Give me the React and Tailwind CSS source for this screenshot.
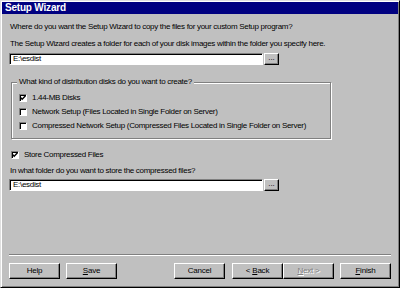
import React from "react";

const font = { fontFamily: '"Liberation Sans", Arial, sans-serif' };

const raised =
  "border border-t-white border-l-white border-r-black border-b-black shadow-[inset_-1px_-1px_0_#808080]";
const sunken =
  "border border-t-[#808080] border-l-[#808080] border-r-white border-b-white shadow-[inset_1px_1px_0_#000]";

const txt = "text-[8px] tracking-[-0.3px] whitespace-nowrap text-black";

function Field({ value }) {
  return (
    <div className="flex items-center gap-[1px]">
      <div className={`${sunken} bg-white w-[254px] h-[12px] flex items-center pl-[3px] leading-none ${txt}`}>
        {value}
      </div>
      <button className={`${raised} bg-[#c0c0c0] w-[15px] h-[12px] flex items-center justify-center text-[8px] leading-none text-black pb-[3px]`}>
        ...
      </button>
    </div>
  );
}

function Check({ checked, label }) {
  return (
    <div className="flex items-center h-[12px]">
      <span className={`${sunken} bg-white w-[8px] h-[8px] flex items-center justify-center shrink-0`}>
        {checked && (
          <svg width="6" height="6" viewBox="0 0 6 6">
            <path d="M0.5 2.5 L2.2 4.3 L5.5 0.8" stroke="#000" strokeWidth="1.4" fill="none" />
          </svg>
        )}
      </span>
      <span className={`ml-[5px] leading-none ${txt}`}>{label}</span>
    </div>
  );
}

function Btn({ children, disabled, className = "" }) {
  return (
    <button
      className={`${raised} bg-[#c0c0c0] w-[51px] h-[16px] flex items-center justify-center text-[8px] tracking-[-0.2px] leading-none ${
        disabled ? "text-[#808080] [text-shadow:1px_1px_0_#fff]" : "text-black"
      } ${className}`}
    >
      {children}
    </button>
  );
}

export default function App() {
  return (
    <div
      style={font}
      className="w-[400px] h-[288px] bg-[#c0c0c0] flex flex-col border border-t-[#dfdfdf] border-l-[#dfdfdf] border-r-black border-b-black shadow-[inset_1px_1px_0_#fff,inset_-1px_-1px_0_#808080] p-[1px] pb-[8px]"
    >
      <div className="h-[12px] bg-[#000080] flex items-center pl-[3px] text-white font-bold text-[10px] tracking-[-0.2px] leading-none">
        Setup Wizard
      </div>

      <div className="flex flex-col flex-1 px-[7px]">
        <p className={`mt-[7px] h-[12px] leading-[12px] pl-[1px] ${txt}`}>
          Where do you want the Setup Wizard to copy the files for your custom Setup program?
        </p>
        <p className={`mt-[5px] h-[12px] leading-[12px] pl-[1px] ${txt}`}>
          The Setup Wizard creates a folder for each of your disk images within the folder you specify here.
        </p>
        <div className="mt-[3px]">
          <Field value="E:\esdist" />
        </div>

        <div className="relative mt-[17px] ml-[2px] w-[320px] border border-[#808080] shadow-[inset_1px_1px_0_#fff,1px_1px_0_#fff] pt-[9px] pb-[6px] pl-[7px] flex flex-col gap-[2px]">
          <span className={`absolute -top-[7px] left-[5px] bg-[#c0c0c0] px-[2px] h-[12px] leading-[12px] ${txt}`}>
            What kind of distribution disks do you want to create?
          </span>
          <Check checked label="1.44-MB Disks" />
          <Check label="Network Setup (Files Located in Single Folder on Server)" />
          <Check label="Compressed Network Setup (Compressed Files Located in Single Folder on Server)" />
        </div>

        <div className="mt-[10px] pl-[2px]">
          <Check checked label="Store Compressed Files" />
        </div>
        <p className={`mt-[4px] h-[12px] leading-[12px] pl-[1px] ${txt}`}>
          In what folder do you want to store the compressed files?
        </p>
        <div className="mt-[2px]">
          <Field value="E:\esdist" />
        </div>

        <div className="flex-1" />

        <div className="w-[382px] h-[2px] border-t border-t-[#808080] border-b border-b-white" />

        <div className="mt-[7px] flex items-center">
          <Btn>Help</Btn>
          <Btn className="ml-[6px]">
            <span className="underline">S</span>ave
          </Btn>
          <Btn className="ml-[57px]">Cancel</Btn>
          <Btn className="ml-[7px]">
            &lt; <span className="underline ml-[2px]">B</span>ack
          </Btn>
          <Btn disabled>
            <span className="underline">N</span>ext &gt;
          </Btn>
          <Btn className="ml-[6px]">
            <span className="underline">F</span>inish
          </Btn>
        </div>
      </div>
    </div>
  );
}
